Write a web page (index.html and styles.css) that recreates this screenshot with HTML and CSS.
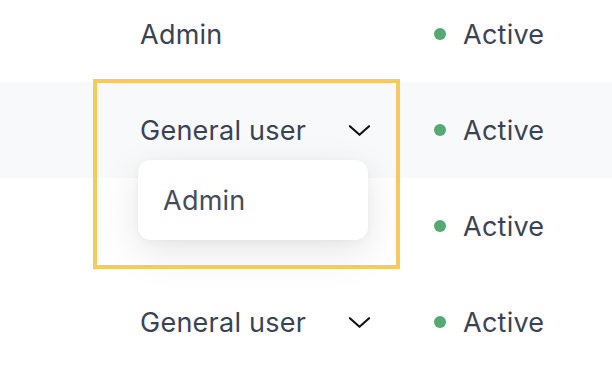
FILE: index.html
```html
<!DOCTYPE html>
<html>
<head>
<meta charset="utf-8">
<link rel="stylesheet" href="styles.css">
</head>
<body>
<div class="table">
  <div class="row">
    <div class="role"><span>Admin</span></div>
    <div class="status"><span class="dot"></span><span>Active</span></div>
  </div>
  <div class="row row-hover">
    <div class="role"><span>General user</span>
      <svg class="chev" viewBox="0 0 24 13" width="23" height="13"><polyline points="2,2 12,11 22,2" fill="none" stroke="#111" stroke-width="2.2" stroke-linecap="round" stroke-linejoin="round"/></svg>
    </div>
    <div class="status"><span class="dot"></span><span>Active</span></div>
  </div>
  <div class="row">
    <div class="role"></div>
    <div class="status"><span class="dot"></span><span>Active</span></div>
  </div>
  <div class="row">
    <div class="role"><span>General user</span>
      <svg class="chev" viewBox="0 0 24 13" width="23" height="13"><polyline points="2,2 12,11 22,2" fill="none" stroke="#111" stroke-width="2.2" stroke-linecap="round" stroke-linejoin="round"/></svg>
    </div>
    <div class="status"><span class="dot"></span><span>Active</span></div>
  </div>
  <div class="menu"><div class="menu-item">Admin</div></div>
  <div class="highlight"></div>
</div>
</body>
</html>
```
FILE: styles.css
```css
html, body {
  margin: 0;
  padding: 0;
  background: #ffffff;
  overflow: hidden;
}
body {
  font-family: Inter, "Noto Sans", sans-serif;
  color: #3b4353;
  font-size: 27px;
  letter-spacing: 0.25px;
}
.table {
  position: relative;
  margin-top: -14px;
  width: 612px;
}
.row {
  display: flex;
  align-items: center;
  height: 96px;
}
.row-hover {
  background: #f8f9fb;
}
.role {
  display: flex;
  align-items: center;
  justify-content: space-between;
  box-sizing: border-box;
  margin-left: 140px;
  width: 231px;
  margin-right: 63px;
}
.chev {
  display: block;
}
.status {
  display: flex;
  align-items: center;
  gap: 17px;
}
.dot {
  width: 12px;
  height: 12px;
  border-radius: 50%;
  background: #53aa72;
}
.menu {
  position: absolute;
  left: 138px;
  top: 174px;
  width: 230px;
  height: 80px;
  background: #ffffff;
  border-radius: 13px;
  box-shadow: 0 12px 40px rgba(0, 0, 0, 0.10), 0 2px 8px rgba(0, 0, 0, 0.04);
  display: flex;
  align-items: center;
}
.menu-item {
  padding-left: 25px;
  color: #444c5c;
}
.highlight {
  position: absolute;
  left: 93px;
  top: 93px;
  width: 307px;
  height: 190px;
  box-sizing: border-box;
  border: 4px solid #f6ca5e;
}
```
